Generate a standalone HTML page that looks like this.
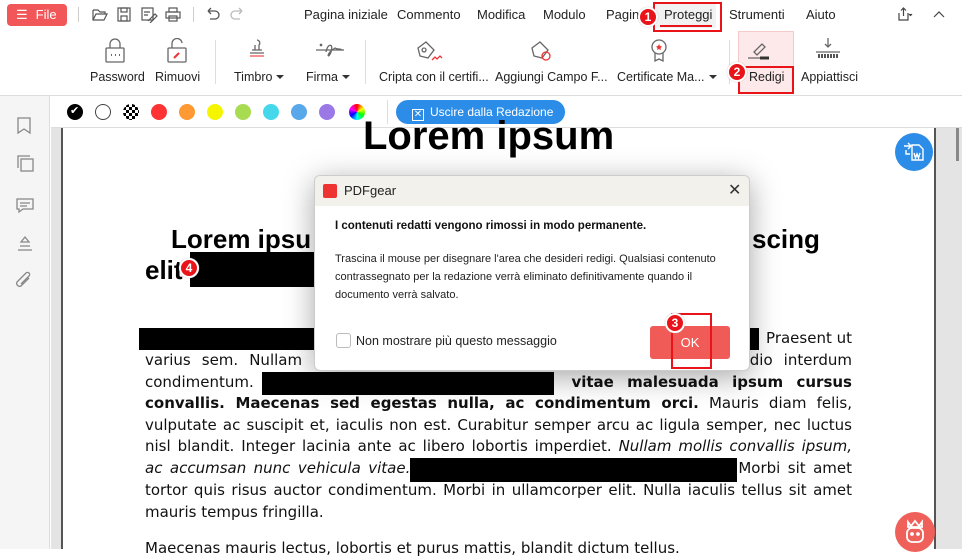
<!DOCTYPE html>
<html><head><meta charset="utf-8"><style>
*{margin:0;padding:0;box-sizing:border-box}
body{width:962px;height:549px;overflow:hidden;position:relative;background:#fff;font-family:"Liberation Sans",sans-serif;color:#222}
.a{position:absolute;white-space:nowrap}
.menu{top:7px;font-family:"Liberation Sans",sans-serif;font-size:13px;color:#222}
.rl{font-family:"Liberation Sans",sans-serif;font-size:12.5px;line-height:15px;color:#222;top:70px;white-space:nowrap}
.tri{display:inline-block;width:0;height:0;border-left:4px solid transparent;border-right:4px solid transparent;border-top:4px solid #333;vertical-align:2px;margin-left:4px}
.dot{position:absolute;top:104px;width:16px;height:16px;border-radius:50%}
.badge{position:absolute;width:20px;height:20px;border-radius:50%;background:#e8141a;border:2px solid #fff;color:#fff;font:bold 12px "Liberation Sans",sans-serif;text-align:center;line-height:16px;box-shadow:0 0 1px #999}
.ln{position:absolute;left:145px;width:707px;font-family:"DejaVu Sans",sans-serif;font-size:15px;line-height:21.7px;text-align:justify;text-align-last:justify;white-space:nowrap;color:#111}
.bk{position:absolute;background:#000}
.red{position:absolute;border:2px solid #e8141a}
svg{position:absolute}
.gap{display:inline-block;height:1px}
</style></head><body>
<div class="a" style="left:7px;top:4px;width:60px;height:22px;background:#f15759;border-radius:4px;color:#fff;font-size:13px;line-height:22px"><span style="margin-left:9px">☰</span><span style="margin-left:8px">File</span></div>
<div class="a" style="left:78px;top:7px;width:1px;height:15px;background:#ccc"></div>
<svg style="left:92px;top:7px" width="90" height="16" fill="none" stroke="#555" stroke-width="1.2">
<path d="M1 3h5l2 2h5v2M1 3v10h11l3-6H4l-3 6"/>
<rect x="26" y="1" width="12" height="13"/><rect x="29" y="1" width="6" height="4"/><rect x="29" y="9" width="6" height="5"/>
<rect x="50" y="1" width="11" height="12"/><path d="M52 5h6M52 8h4M56 14l7-7 2 2-7 7"/>
<rect x="77" y="1" width="8" height="4"/><rect x="74" y="5" width="14" height="6"/><rect x="77" y="9" width="8" height="5"/>
</svg>
<div class="a" style="left:193px;top:7px;width:1px;height:15px;background:#ccc"></div>
<svg style="left:205px;top:6px" width="40" height="16" fill="none" stroke-width="1.3"><path d="M3 5h7a4 4 0 0 1 0 8H5M3 5l3-3M3 5l3 3" stroke="#555"/><path d="M37 5h-7a4 4 0 0 0 0 8h5M37 5l-3-3M37 5l-3 3" stroke="#bbb"/></svg>
<div class="a menu" style="left:304px">Pagina iniziale</div>
<div class="a menu" style="left:397px">Commento</div>
<div class="a menu" style="left:477px">Modifica</div>
<div class="a menu" style="left:543px">Modulo</div>
<div class="a menu" style="left:606px">Pagina</div>
<div class="a" style="left:656px;top:4px;width:60px;height:24px;background:#f2f2f2"></div>
<div class="a menu" style="left:664px">Proteggi</div>
<div class="a" style="left:660px;top:25px;width:52px;height:2px;background:#e8141a"></div>
<div class="red" style="left:653px;top:2px;width:69px;height:30px"></div>
<div class="a menu" style="left:729px">Strumenti</div>
<div class="a menu" style="left:806px">Aiuto</div>
<svg style="left:896px;top:6px" width="60" height="16" fill="none" stroke="#444" stroke-width="1.2"><path d="M3 7v7h9V7M7.5 10V2M5 4.5l2.5-2.5 2.5 2.5"/><path d="M13 8l1.5 1.5L16 8" fill="#444"/><path d="M38 11l5-5 5 5"/></svg>
<div class="badge" style="left:638px;top:7px">1</div>
<div class="a" style="left:738px;top:31px;width:56px;height:62px;background:#fde9e9;border:1px solid #f5caca"></div>
<svg style="left:100px;top:38px" width="760" height="28" fill="none" stroke="#666" stroke-width="1.3">
<rect x="6" y="10" width="18" height="14" rx="1"/><path d="M10 10V6a5 5 0 0 1 10 0v4"/><path d="M11 17h1M15 17h1M19 17h1" stroke="#e33" stroke-width="2"/>
<rect x="68" y="10" width="18" height="14" rx="1"/><path d="M72 10V6a5 5 0 0 1 10-1"/><path d="M74 20l5-5" stroke="#e33" stroke-width="2"/>
<path d="M152 12h10M157 2a3 3 0 0 1 2 5v5M155 7v5M150 15h14" /><path d="M150 18h14" stroke="#e55"/>
<path d="M216 12h28M220 6l2 2M222 6l-2 2M226 14c2-10 8-8 5 0s-6 2 4-4c3 2 5 0 7 2"/>
<path d="M326 4l8 8-6 8-8-2-2-8zM324 10a2 2 0 1 0 .1 0" /><path d="M332 22l3-3 2 2 3-3 2 2" stroke="#e33"/>
<path d="M440 4l8 8-6 8-8-2-2-8z"/><circle cx="446" cy="18" r="4" stroke="#e33"/>
<circle cx="559" cy="9" r="7"/><path d="M555 15v8l4-2 4 2v-8"/><path d="M559 6l1 2 2 .5-1.5 1.5.5 2-2-1-2 1 .5-2-1.5-1.5 2-.5z" fill="#e33" stroke="none"/>
<path d="M654 14l8-8 3 3-8 8zM648 20h18" /><path d="M660 20h9" stroke="#333" stroke-width="3"/>
<path d="M728 0v9M725 6l3 3 3-3M716 14h24" /><path d="M718 18h20" stroke="#555" stroke-width="4" stroke-dasharray="2 1"/>
</svg>
<div class="a rl" style="left:90px">Password</div>
<div class="a rl" style="left:155px">Rimuovi</div>
<div class="a" style="left:215px;top:40px;width:1px;height:44px;background:#ddd"></div>
<div class="a rl" style="left:234px">Timbro<span class="tri"></span></div>
<div class="a rl" style="left:306px">Firma<span class="tri"></span></div>
<div class="a" style="left:365px;top:40px;width:1px;height:44px;background:#ddd"></div>
<div class="a rl" style="left:379px">Cripta con il certifi...</div>
<div class="a rl" style="left:495px">Aggiungi Campo F...</div>
<div class="a rl" style="left:617px">Certificate Ma...<span class="tri"></span></div>
<div class="a" style="left:729px;top:40px;width:1px;height:44px;background:#ddd"></div>
<div class="a rl" style="left:749px">Redigi</div>
<div class="a rl" style="left:801px">Appiattisci</div>
<div class="red" style="left:738px;top:66px;width:56px;height:28px"></div>
<div class="badge" style="left:727px;top:62px">2</div>
<div class="a" style="left:0;top:95px;width:962px;height:1px;background:#ddd"></div>
<div class="a" style="left:0;top:96px;width:50px;height:453px;background:#f5f5f5;border-right:1px solid #ddd"></div>
<svg style="left:14px;top:115px" width="22" height="180" fill="none" stroke="#888" stroke-width="1.3">
<path d="M4 3h12v15l-6-4-6 4z"/>
<rect x="7" y="44" width="12" height="12"/><path d="M4 53V41h12"/>
<path d="M3 84h16v10h-10l-4 3v-3H3z M6 88h10M6 91h7"/>
<path d="M6 131h10M4 135h14" /><path d="M7 127l4-5 4 5z"/>
<path d="M15 163l-8 8a3 3 0 0 1-4-4l9-9a2 2 0 0 1 3 3l-8 8"/>
</svg>
<div class="a" style="left:51px;top:128px;width:911px;height:421px;background:#e4e4e4"></div>
<div class="a" style="left:61px;top:128px;width:875px;height:421px;background:#fff;border-left:2px solid #555;border-right:2px solid #555"></div>
<div class="a" style="left:956px;top:128px;width:3px;height:33px;background:#888"></div>
<div class="a" style="left:51px;top:96px;width:911px;height:32px;background:#fff;border-bottom:1px solid #ddd"></div>
<div class="dot" style="left:67px;background:#000"></div><div class="a" style="left:70px;top:104px;color:#fff;font-size:11px">✔</div>
<div class="dot" style="left:95px;border:1px solid #444"></div>
<div class="dot" style="left:123px;background:repeating-conic-gradient(#000 0 25%,#fff 0 50%) 0 0/6px 6px"></div>
<div class="dot" style="left:151px;background:#f33"></div>
<div class="dot" style="left:179px;background:#f93"></div>
<div class="dot" style="left:207px;background:#f5f500"></div>
<div class="dot" style="left:235px;background:#a8dc50"></div>
<div class="dot" style="left:263px;background:#45d8ec"></div>
<div class="dot" style="left:291px;background:#58a8ea"></div>
<div class="dot" style="left:319px;background:#9a78e6"></div>
<div class="dot" style="left:349px;background:conic-gradient(red,yellow,lime,cyan,blue,magenta,red)"></div>
<div class="a" style="left:387px;top:100px;width:1px;height:24px;background:#ddd"></div>
<div class="a" style="left:396px;top:100px;width:169px;height:24px;background:#2b8de8;border-radius:12px;color:#fff;font-size:12px;line-height:24px;padding-left:16px"><span style="display:inline-block;width:12px;height:12px;border:1px solid #fff;vertical-align:-1px;margin-right:6px;font-size:10px;line-height:10px;text-align:center">✕</span>Uscire dalla Redazione</div>
<div class="a" style="left:363px;top:114px;font:bold 40px 'Liberation Sans',sans-serif;color:#000">Lorem ipsum</div>
<div class="a" style="left:171px;top:224px;font:bold 26px 'Liberation Sans',sans-serif;color:#000">Lorem ipsu</div>
<div class="a" style="left:752px;top:224px;font:bold 26px 'Liberation Sans',sans-serif;color:#000">scing</div>
<div class="a" style="left:145px;top:255px;font:bold 26px 'Liberation Sans',sans-serif;color:#000">elit</div>
<div class="bk" style="left:190px;top:252px;width:130px;height:35px"></div>
<div class="badge" style="left:179px;top:258px">4</div>
<div class="bk" style="left:139px;top:328px;width:180px;height:22px"></div>
<div class="bk" style="left:745px;top:328px;width:14px;height:22px"></div>
<div class="ln" style="top:328px;text-align:right;text-align-last:right">Praesent ut</div>
<div class="ln" style="top:350px">varius sem. Nullam at metus quis massa accumsan fermentum non a odio interdum</div>
<div class="ln" style="top:372px">condimentum. <span class="gap" style="width:292px"></span> <b>vitae malesuada ipsum cursus</b></div>
<div class="bk" style="left:262px;top:372px;width:292px;height:23px"></div>
<div class="ln" style="top:393px"><b>convallis. Maecenas sed egestas nulla, ac condimentum orci.</b> Mauris diam felis,</div>
<div class="ln" style="top:415px">vulputate ac suscipit et, iaculis non est. Curabitur semper arcu ac ligula semper, nec luctus</div>
<div class="ln" style="top:436px">nisl blandit. Integer lacinia ante ac libero lobortis imperdiet. <i>Nullam mollis convallis ipsum,</i></div>
<div class="ln" style="top:458px"><i>ac accumsan nunc vehicula vitae.</i><span class="gap" style="width:328px"></span>Morbi sit amet</div>
<div class="bk" style="left:410px;top:458px;width:327px;height:24px"></div>
<div class="ln" style="top:480px">tortor quis risus auctor condimentum. Morbi in ullamcorper elit. Nulla iaculis tellus sit amet</div>
<div class="ln" style="top:502px;text-align-last:left">mauris tempus fringilla.</div>
<div class="ln" style="top:538px;text-align-last:left">Maecenas mauris lectus, lobortis et purus mattis, blandit dictum tellus.</div>
<div class="a" style="left:895px;top:133px;width:38px;height:38px;border-radius:50%;background:#2b8de8"></div>
<svg style="left:901px;top:139px" width="26" height="26" fill="none" stroke="#fff" stroke-width="1.4"><path d="M3 7h7M7 4l3 3-3 3M5 11v4h4"/><path d="M11 6h7l4 4v11H11z"/><path d="M13 14l1.5 5 1.5-4 1.5 4 1.5-5"/></svg>
<div class="a" style="left:895px;top:512px;width:40px;height:40px;border-radius:50%;background:#f0605a"></div>
<svg style="left:903px;top:516px" width="24" height="30" fill="none" stroke="#fff" stroke-width="1.8"><path d="M5 6l3 4 4-5 4 5 3-4v5H5z"/><rect x="4" y="12" width="16" height="14" rx="5"/><circle cx="9" cy="18" r="1" fill="#fff"/><circle cx="15" cy="18" r="1" fill="#fff"/></svg>
<div class="a" style="left:314px;top:175px;width:436px;height:196px;background:#fff;border:1px solid #ccc;border-radius:6px;box-shadow:0 6px 30px rgba(0,0,0,.35);overflow:hidden">
 <div style="height:30px;background:#f3f1ec;position:relative">
  <div class="a" style="left:8px;top:8px;width:14px;height:14px;background:#e33;border-radius:2px"></div>
  <div class="a" style="left:29px;top:7px;font-size:13px;color:#222">PDFgear</div>
  <div class="a" style="left:413px;top:4px;font-size:16px;color:#333">✕</div>
 </div>
 <div class="a" style="left:20px;top:44px;font:bold 11.5px 'Liberation Sans',sans-serif;color:#111">I contenuti redatti vengono rimossi in modo permanente.</div>
 <div class="a" style="left:20px;top:74px;width:410px;white-space:normal;font:11px/18px 'Liberation Sans',sans-serif;color:#222">Trascina il mouse per disegnare l'area che desideri redigi. Qualsiasi contenuto contrassegnato per la redazione verrà eliminato definitivamente quando il documento verrà salvato.</div>
 <div class="a" style="left:21px;top:157px;width:15px;height:15px;border:1px solid #bbb;border-radius:3px"></div>
 <div class="a" style="left:41px;top:158px;font:12.5px 'Liberation Sans',sans-serif;color:#222">Non mostrare più questo messaggio</div>
 <div class="a" style="left:335px;top:150px;width:80px;height:33px;background:#f15b57;border-radius:3px;color:#fff;font:13px/33px 'Liberation Sans',sans-serif;text-align:center">OK</div>
</div>
<div class="red" style="left:671px;top:313px;width:41px;height:56px"></div>
<div class="badge" style="left:665px;top:313px">3</div>
</body></html>
